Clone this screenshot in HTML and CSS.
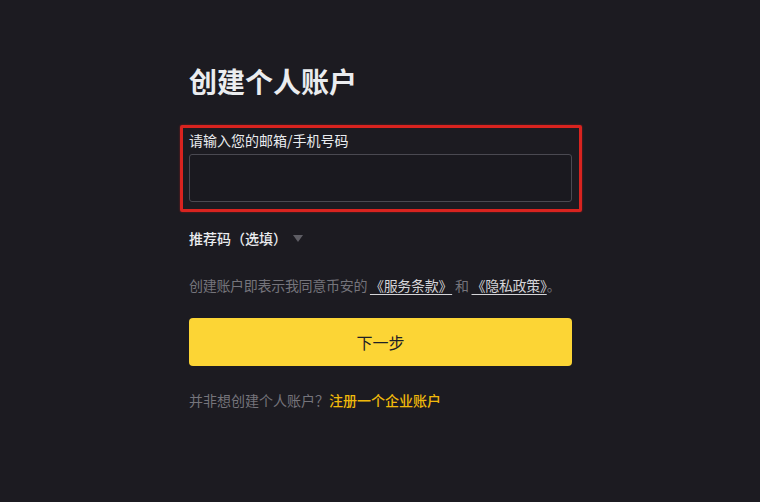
FILE: index.html
```html
<!DOCTYPE html>
<html lang="zh-CN">
<head>
<meta charset="utf-8">
<title>创建个人账户</title>
<link rel="stylesheet" href="styles.css">
</head>
<body>
<main class="page">
  <h1 class="title">创建个人账户</h1>
  <div class="field">
    <label class="label" for="account">请输入您的邮箱/手机号码</label>
    <input class="input" id="account" type="text">
    <div class="highlight"></div>
  </div>
  <div class="referral">
    <span>推荐码（选填）</span>
    <span class="caret"></span>
  </div>
  <p class="terms">创建账户即表示我同意币安的 <a href="#" class="link">《服务条款》</a> 和 <a href="#" class="link">《隐私政策》</a>。</p>
  <button class="next" type="button">下一步</button>
  <p class="alt">并非想创建个人账户？<a href="#" class="alt-link">注册一个企业账户</a></p>
</main>
</body>
</html>
```

FILE: styles.css
```css
html, body {
  margin: 0;
  padding: 0;
  background: #1c1b21;
  height: 100%;
}
body {
  font-family: "Noto Sans CJK SC", "Noto Sans", sans-serif;
  color: #eaecef;
}
.page {
  width: 384px;
  margin: 0 auto;
  padding-top: 63px;
  display: flex;
  flex-direction: column;
}
.title {
  margin: 0;
  font-size: 28px;
  line-height: 36px;
  font-weight: 700;
  color: #eaecef;
  padding-left: 1px;
}
.field {
  position: relative;
  margin-top: 31px;
  display: flex;
  flex-direction: column;
  gap: 4px;
}
.label {
  font-size: 14px;
  line-height: 20px;
  color: #eaecef;
  padding-left: 1px;
}
.input {
  box-sizing: border-box;
  height: 48px;
  margin: 0 0 0 1px;
  background: #1a191f;
  border: 1px solid #4a4951;
  border-radius: 3px;
  outline: none;
  color: #eaecef;
}
.highlight {
  position: absolute;
  left: -8px;
  right: -10px;
  top: -5px;
  bottom: -10px;
  border: 3px solid #d8231f;
  border-radius: 2px;
  box-shadow: 0 0 2px rgba(216, 35, 31, 0.6);
  pointer-events: none;
}
.referral {
  margin-top: 26px;
  display: flex;
  align-items: center;
  gap: 6px;
  font-size: 14px;
  line-height: 20px;
  font-weight: 500;
  color: #eaecef;
  padding-left: 1px;
}
.caret {
  width: 0;
  height: 0;
  border-left: 5px solid transparent;
  border-right: 5px solid transparent;
  border-top: 7px solid #5e5d64;
  margin-top: 1px;
}
.terms {
  margin: 27px 0 0;
  font-size: 14px;
  line-height: 20px;
  color: #75747b;
  white-space: nowrap;
  letter-spacing: -0.3px;
  padding-left: 1px;
}
.link {
  color: #d4d4d8;
  text-decoration: underline;
  text-underline-offset: 3px;
}
.next {
  margin: 23px 0 0 1px;
  height: 48px;
  border: none;
  border-radius: 4px;
  background: #fcd535;
  color: #1e2026;
  font-family: inherit;
  font-size: 16px;
}
.alt {
  margin: 24px 0 0;
  font-size: 14px;
  line-height: 20px;
  color: #75747b;
  padding-left: 1px;
}
.alt-link {
  color: #f0b90b;
  font-weight: 500;
  text-decoration: none;
}
```
